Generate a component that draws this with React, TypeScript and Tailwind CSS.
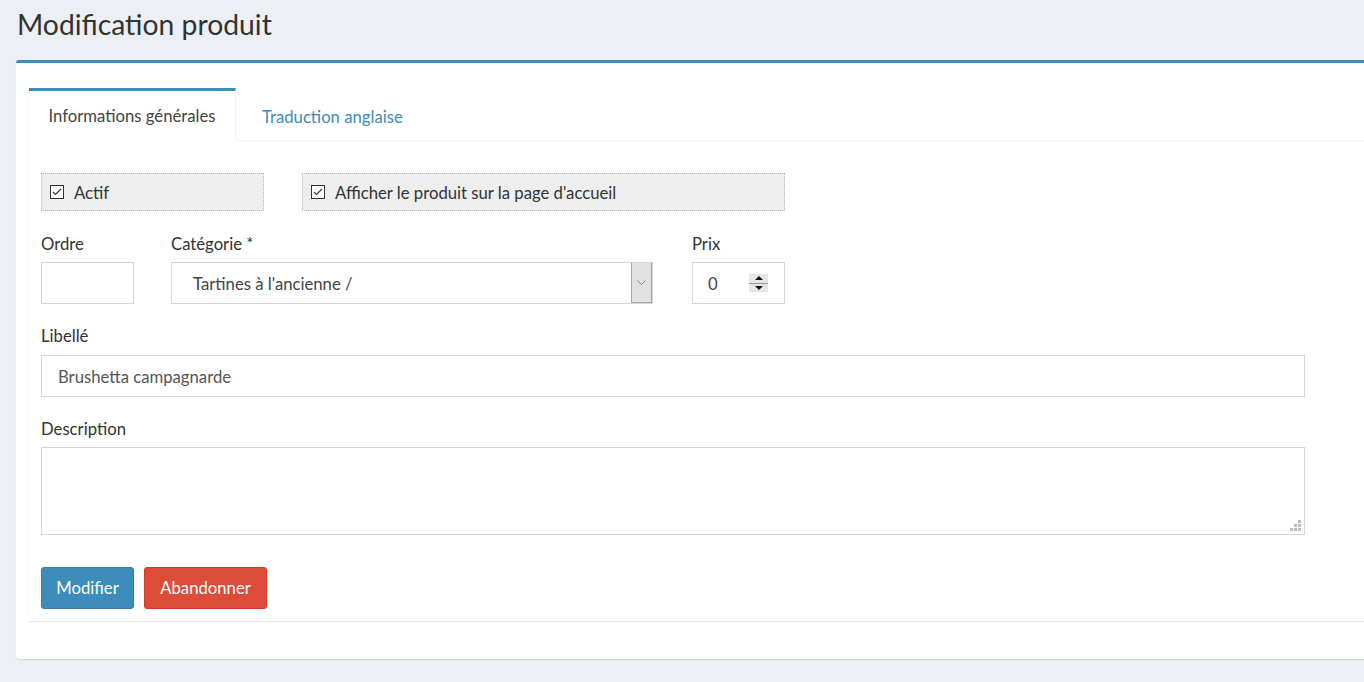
import React from 'react'

const font = { fontFamily: 'Lato, "Noto Sans", sans-serif' }

function CheckBox() {
  return (
    <span className="flex h-[14px] w-[14px] shrink-0 items-center justify-center border border-[#333] bg-white">
      <svg width="10" height="8" viewBox="0 0 10 8" fill="none">
        <path d="M1 4l2.5 2.5L9 1" stroke="#333" strokeWidth="1.1" />
      </svg>
    </span>
  )
}

function CheckField({ label, width }: { label: string; width: string }) {
  return (
    <div className={`flex h-[38px] items-center gap-[10px] border border-dotted border-[#bbb] bg-[#eee] pl-[8px] text-[16.7px] text-[#333] ${width}`}>
      <CheckBox />
      <span className="pt-[3px]">{label}</span>
    </div>
  )
}

function Label({ children }: { children: React.ReactNode }) {
  return <div className="h-[20px] text-[16.7px] leading-[20px] text-[#333]">{children}</div>
}

function Spinner() {
  return (
    <span className="flex h-[18px] w-[19px] flex-col bg-[#e6e6e6]">
      <span className="flex flex-1 items-center justify-center border-b border-[#999]">
        <svg width="8" height="4" viewBox="0 0 8 4"><path d="M0 4L4 0l4 4z" fill="#111" /></svg>
      </span>
      <span className="flex flex-1 items-center justify-center">
        <svg width="8" height="4" viewBox="0 0 8 4"><path d="M0 0l4 4 4-4z" fill="#111" /></svg>
      </span>
    </span>
  )
}

export default function App() {
  return (
    <div className="min-h-[682px] overflow-hidden bg-[#ecf0f5] pl-4" style={font}>
      <h1 className="flex h-[60px] items-center pb-[12px] pl-[1px] text-[28.3px] font-normal text-[#333]">
        Modification produit
      </h1>
      <div className="mr-[-20px] rounded-[3px] border-t-[3px] border-[#3c8dbc] bg-white pb-[38px] pl-[13px] pt-[25px] shadow-[0_1px_1px_rgba(0,0,0,0.12)]">
        <div className="bg-white pb-[12px] shadow-[0_1px_1px_rgba(0,0,0,0.1)]">
          <div className="flex h-[53px] border-b border-[#f4f4f4]">
            <div className="mb-[-1px] flex w-[207px] items-center justify-center border-r border-t-[3px] border-r-[#f4f4f4] border-t-[#3c8dbc] bg-white pt-[2px] text-[16.7px] text-[#444]">
              Informations générales
            </div>
            <div className="flex items-center pl-[26px] pt-[7px] text-[16.7px] text-[#3c8dbc]">Traduction anglaise</div>
          </div>

          <div className="pl-[12px] pt-[32px]">
            <div className="flex gap-[38px]">
              <CheckField label="Actif" width="w-[223px]" />
              <CheckField label="Afficher le produit sur la page d'accueil" width="w-[483px]" />
            </div>

            <div className="mt-[23px] flex">
              <div className="w-[93px]">
                <Label>Ordre</Label>
                <div className="mt-[8px] h-[42px] border border-[#d2d6de]" />
              </div>
              <div className="ml-[37px] w-[482px]">
                <Label>Catégorie *</Label>
                <div className="mt-[8px] flex h-[42px] items-stretch border border-[#d2d6de] pl-[21px] text-[16.7px] text-[#444]">
                  <span className="flex flex-1 items-center pt-[3px]">Tartines à l'ancienne /</span>
                  <span className="flex w-[21px] items-center justify-center border-x border-b border-[#a6a6a6] bg-[#e1e1e1]">
                    <svg width="9" height="5" viewBox="0 0 9 5" fill="none">
                      <path d="M0.5 0.5L4.5 4.5 8.5 0.5" stroke="#777" strokeWidth="0.9" />
                    </svg>
                  </span>
                </div>
              </div>
              <div className="ml-[39px] w-[93px]">
                <Label>Prix</Label>
                <div className="mt-[8px] flex h-[42px] items-center border border-[#d2d6de] pl-[15px] pr-[16px] text-[16.7px] text-[#444]">
                  <span className="flex-1 pt-[3px]">0</span>
                  <Spinner />
                </div>
              </div>
            </div>

            <div className="mt-[22px] w-[1264px]">
              <Label>Libellé</Label>
              <div className="mt-[9px] flex h-[42px] items-center border border-[#d2d6de] pl-[16px] pt-[3px] text-[16.7px] text-[#555]">
                Brushetta campagnarde
              </div>
            </div>

            <div className="mt-[22px] w-[1264px]">
              <Label>Description</Label>
              <div className="mt-[8px] flex h-[88px] items-end justify-end border border-[#d2d6de] pb-[3px] pr-[3px]">
                <svg width="11" height="11" viewBox="0 0 11 11" fill="#bbb">
                  <rect x="8" y="0" width="3" height="3" />
                  <rect x="4" y="4" width="3" height="3" />
                  <rect x="8" y="4" width="3" height="3" />
                  <rect x="0" y="8" width="3" height="3" />
                  <rect x="4" y="8" width="3" height="3" />
                  <rect x="8" y="8" width="3" height="3" />
                </svg>
              </div>
            </div>

            <div className="mt-[32px] flex gap-[10px]">
              <button className="h-[42px] w-[93px] rounded-[3px] border border-[#367fa9] bg-[#3c8dbc] pt-[2px] text-[16.7px] text-white">
                Modifier
              </button>
              <button className="h-[42px] w-[123px] rounded-[3px] border border-[#d73925] bg-[#dd4b39] pt-[2px] text-[16.7px] text-white">
                Abandonner
              </button>
            </div>
          </div>
        </div>
      </div>
    </div>
  )
}
